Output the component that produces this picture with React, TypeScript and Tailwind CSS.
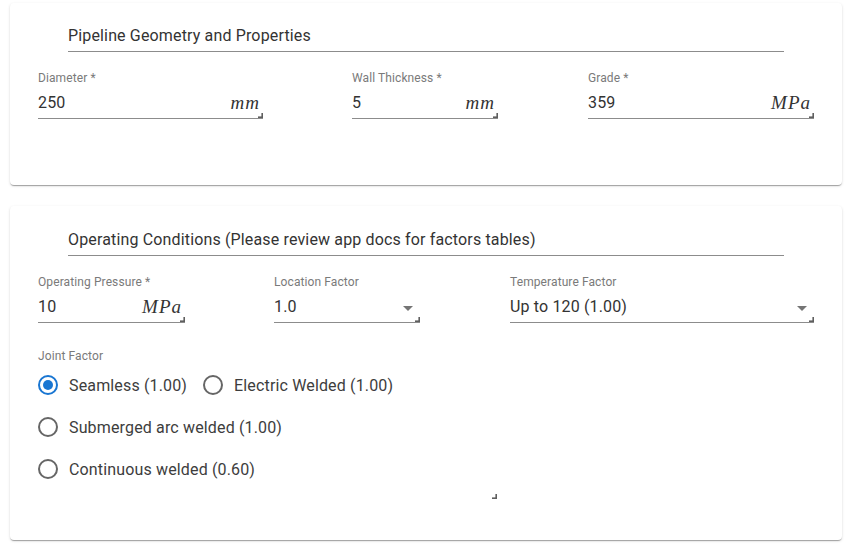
import React from 'react';

// little resize-handle corner seen at the end of every field
function Corner({ className = '' }: { className?: string }) {
  return (
    <svg className={className} width="5" height="5" viewBox="0 0 5 5">
      <rect x="3.4" y="0" width="1.6" height="5" fill="#5f5f5f" />
      <rect x="0" y="3.4" width="5" height="1.6" fill="#5f5f5f" />
    </svg>
  );
}

function ArrowDrop() {
  return (
    <svg width="10" height="5" viewBox="0 0 10 5" className="mb-[5px] mr-[7px]">
      <path d="M0 0l5 5 5-5z" fill="rgba(0,0,0,0.54)" />
    </svg>
  );
}

type FieldProps = {
  label: string;
  value: string;
  unit?: string;
  select?: boolean;
  className: string;
};

function Field({ label, value, unit, select, className }: FieldProps) {
  return (
    <div className={`relative flex flex-col ${className}`}>
      <div className="text-[12px] leading-[14px] tracking-[0.1px] text-[#7a7a7a]">{label}</div>
      <div className="mt-[8px] flex items-end justify-between border-b border-[#8c8c8c] pb-[6px]">
        <span className="text-[16px] leading-[19px] tracking-[0.15px] text-[#333]">{value}</span>
        {unit && (
          <span className="pr-[3px] font-['Liberation_Serif',serif] text-[19px] italic leading-[19px] tracking-[1px] text-[#333]">
            {unit}
          </span>
        )}
        {select && <ArrowDrop />}
      </div>
      <Corner className="absolute right-0 bottom-[1px]" />
    </div>
  );
}

function SectionTitle({ children }: { children: React.ReactNode }) {
  return (
    <div className="ml-[30px] w-[716px] border-b border-[#8c8c8c] pb-[6px] text-[16px] leading-[19px] tracking-[0.15px] text-[#333]">
      {children}
    </div>
  );
}

function Radio({ label, checked }: { label: string; checked?: boolean }) {
  return (
    <label className="-ml-[11px] mr-[16px] flex h-[42px] items-center">
      <span className="flex h-[42px] w-[42px] items-center justify-center">
        <svg width="24" height="24" viewBox="0 0 24 24">
          <circle
            cx="12"
            cy="12"
            r="9"
            fill="none"
            stroke={checked ? '#1976d2' : '#666'}
            strokeWidth="2"
          />
          {checked && <circle cx="12" cy="12" r="5" fill="#1976d2" />}
        </svg>
      </span>
      <span className="text-[16px] leading-[19px] tracking-[0.15px] text-[#3d3d3d]">{label}</span>
    </label>
  );
}

const cardCls =
  'ml-[10px] w-[832px] rounded-[4px] bg-white px-[28px] shadow-[0px_2px_1px_-1px_rgba(0,0,0,0.2),0px_1px_1px_0px_rgba(0,0,0,0.14),0px_1px_3px_0px_rgba(0,0,0,0.12)]';

export default function App() {
  return (
    <div className="min-h-screen bg-white pt-[3px] font-['Roboto','Liberation_Sans',sans-serif]">
      {/* Geometry card */}
      <div className={`${cardCls} h-[182px] pt-[23px]`}>
        <SectionTitle>Pipeline Geometry and Properties</SectionTitle>
        <div className="mt-[19px] flex">
          <Field className="w-[225px]" label="Diameter *" value="250" unit="mm" />
          <Field className="ml-[89px] w-[146px]" label="Wall Thickness *" value="5" unit="mm" />
          <Field className="ml-[90px] w-[226px]" label="Grade *" value="359" unit="MPa" />
        </div>
      </div>

      {/* Operating conditions card */}
      <div className={`${cardCls} mt-[21px] h-[334px] pt-[24px]`}>
        <SectionTitle>Operating Conditions (Please review app docs for factors tables)</SectionTitle>
        <div className="mt-[19px] flex">
          <Field className="w-[147px]" label="Operating Pressure *" value="10" unit="MPa" />
          <Field className="ml-[89px] w-[146px]" label="Location Factor" value="1.0" select />
          <Field className="ml-[90px] w-[304px]" label="Temperature Factor" value="Up to 120 (1.00)" select />
        </div>

        <div className="mt-[26px] text-[12px] leading-[14px] tracking-[0.1px] text-[#7a7a7a]">Joint Factor</div>
        <div className="mt-[1px] flex flex-col">
          <div className="flex">
            <Radio label="Seamless (1.00)" checked />
            <Radio label="Electric Welded (1.00)" />
          </div>
          <Radio label="Submerged arc welded (1.00)" />
          <Radio label="Continuous welded (0.60)" />
        </div>
        <Corner className="ml-[454px] mt-[4px]" />
      </div>
    </div>
  );
}
